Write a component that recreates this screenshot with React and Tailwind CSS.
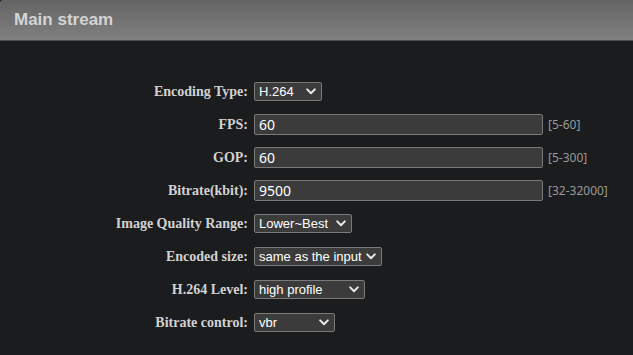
import React from "react";

function Chevron() {
  return (
    <svg width="10" height="7" viewBox="0 0 10 7" className="shrink-0">
      <path d="M1.2 1.4 L5 5.2 L8.8 1.4" fill="none" stroke="#e8e8e8" strokeWidth="2" strokeLinecap="round" strokeLinejoin="round" />
    </svg>
  );
}

function Select({ value, w }) {
  return (
    <div
      className="flex items-center justify-between h-[19px] border border-[#7a7a7a] rounded-[2px] bg-[#3b3b3b] pl-[4px] pr-[5px] text-[13px] text-white font-['Liberation_Sans',Arial,sans-serif] leading-none"
      style={{ width: w }}
    >
      <span>{value}</span>
      <Chevron />
    </div>
  );
}

function Input({ value }) {
  return (
    <div className="flex items-center w-[289px] h-[21px] border border-[#7a7a7a] rounded-[2px] bg-[#3b3b3b] pl-[4px] text-[14px] text-white font-['Noto_Sans',sans-serif] leading-none">
      {value}
    </div>
  );
}

function Row({ label, children, range }) {
  return (
    <div className="flex items-center h-[33px]">
      <div className="w-[249px] pr-[1px] text-right font-['Liberation_Serif',serif] font-bold text-[14px] text-[#d2d2d2]">
        {label}
      </div>
      <div className="pl-[5px] flex items-center">
        {children}
        {range && (
          <span className="ml-[5px] text-[12px] text-[#9a9a9a] font-['Noto_Sans',sans-serif]">{range}</span>
        )}
      </div>
    </div>
  );
}

export default function App() {
  return (
    <div className="w-[633px] h-[355px] bg-[#1b1c1e] overflow-hidden">
      <div className="h-[41px] rounded-tl-[3px] bg-gradient-to-b from-[#646464] to-[#808080] border-b border-[#4c4c4c] flex items-center pl-[14px]">
        <span className="font-['Liberation_Sans',Arial,sans-serif] font-bold text-[17px] text-[#d4d4d4]">Main stream</span>
      </div>
      <div className="pt-[34px] flex flex-col">
        <Row label="Encoding Type:"><Select value="H.264" w={68} /></Row>
        <Row label="FPS:" range="[5-60]"><Input value="60" /></Row>
        <Row label="GOP:" range="[5-300]"><Input value="60" /></Row>
        <Row label="Bitrate(kbit):" range="[32-32000]"><Input value="9500" /></Row>
        <Row label="Image Quality Range:"><Select value="Lower~Best" w={98} /></Row>
        <Row label="Encoded size:"><Select value="same as the input" w={128} /></Row>
        <Row label="H.264 Level:"><Select value="high profile" w={111} /></Row>
        <Row label="Bitrate control:"><Select value="vbr" w={81} /></Row>
      </div>
    </div>
  );
}
